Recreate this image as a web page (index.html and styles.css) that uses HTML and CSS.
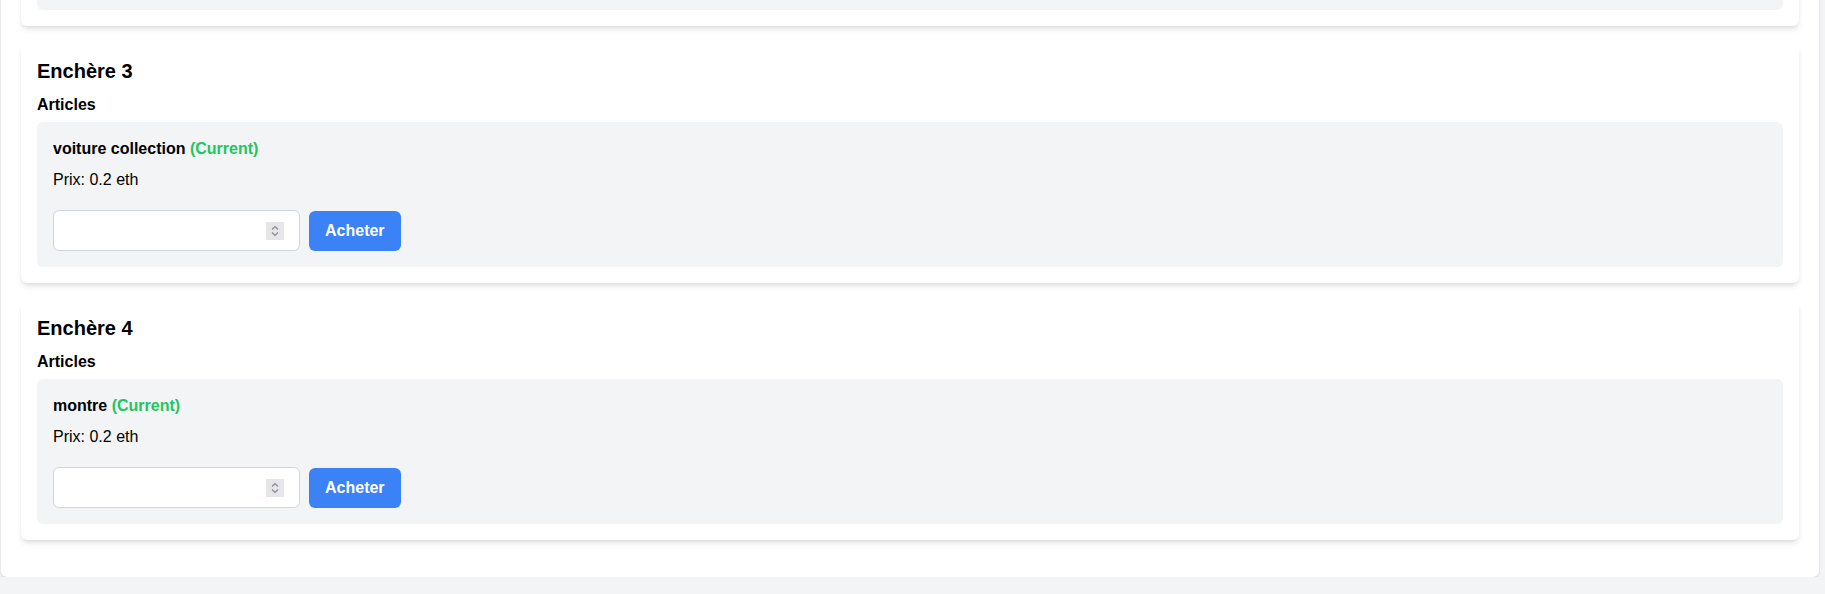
FILE: index.html
```html
<!DOCTYPE html>
<html lang="fr">
<head>
<meta charset="utf-8">
<title>Enchères</title>
<link rel="stylesheet" href="styles.css">
</head>
<body>
<main class="page">
  <section class="card card-tail">
    <div class="item item-tail"></div>
  </section>

  <section class="card">
    <h2 class="card-title">Enchère 3</h2>
    <h3 class="section-title">Articles</h3>
    <div class="item">
      <p class="item-name">voiture collection <span class="status">(Current)</span></p>
      <p class="item-price">Prix: 0.2 eth</p>
      <form class="buy-row">
        <span class="input-wrap">
          <input class="bid-input" type="number" step="0.01">
          <span class="spinner" aria-hidden="true">
            <svg width="18" height="18" viewBox="0 0 18 18"><path d="M6 7.5 L9 4.5 L12 7.5" fill="none" stroke="#8a8a8f" stroke-width="1.2"/><path d="M6 10.5 L9 13.5 L12 10.5" fill="none" stroke="#8a8a8f" stroke-width="1.2"/></svg>
          </span>
        </span>
        <button class="buy-btn" type="button">Acheter</button>
      </form>
    </div>
  </section>

  <section class="card">
    <h2 class="card-title">Enchère 4</h2>
    <h3 class="section-title">Articles</h3>
    <div class="item">
      <p class="item-name">montre <span class="status">(Current)</span></p>
      <p class="item-price">Prix: 0.2 eth</p>
      <form class="buy-row">
        <span class="input-wrap">
          <input class="bid-input" type="number" step="0.01">
          <span class="spinner" aria-hidden="true">
            <svg width="18" height="18" viewBox="0 0 18 18"><path d="M6 7.5 L9 4.5 L12 7.5" fill="none" stroke="#8a8a8f" stroke-width="1.2"/><path d="M6 10.5 L9 13.5 L12 10.5" fill="none" stroke="#8a8a8f" stroke-width="1.2"/></svg>
          </span>
        </span>
        <button class="buy-btn" type="button">Acheter</button>
      </form>
    </div>
  </section>
</main>
</body>
</html>
```

FILE: styles.css
```css
* {
  box-sizing: border-box;
}

html, body {
  margin: 0;
  padding: 0;
  background: #f3f4f6;
  overflow: hidden;
}

body {
  font-family: "Liberation Sans", Arial, sans-serif;
  color: #000;
  font-size: 16px;
}

.page {
  width: 1818px;
  margin: -60px 0 0 1px;
  padding: 20px 20px 37px;
  background: #fff;
  border-radius: 6px;
  box-shadow: 0 1px 3px rgba(0, 0, 0, 0.1), 0 1px 2px rgba(0, 0, 0, 0.06);
  display: flex;
  flex-direction: column;
  gap: 18px;
}

.card {
  background: #fff;
  border-radius: 6px;
  padding: 16px;
  box-shadow: 0 4px 6px -1px rgba(0, 0, 0, 0.1), 0 2px 4px -2px rgba(0, 0, 0, 0.1);
}

.item-tail {
  height: 34px;
  padding: 0;
}

.card-title {
  margin: 0 0 11px;
  font-size: 20px;
  line-height: 22px;
  font-weight: 700;
}

.section-title {
  margin: 0 0 5px;
  font-size: 16px;
  line-height: 24px;
  font-weight: 700;
}

.item {
  background: #f3f4f6;
  border-radius: 6px;
  padding: 16px;
}

.item-name {
  margin: 0 0 8px;
  font-weight: 700;
  line-height: 22px;
}

.status {
  color: #22c55e;
}

.item-price {
  margin: 0 0 18px;
  line-height: 24px;
}

.buy-row {
  display: flex;
  align-items: center;
  gap: 9px;
  margin: 0;
}

.input-wrap {
  position: relative;
  display: block;
  width: 247px;
  height: 41px;
}

.bid-input {
  display: block;
  width: 100%;
  height: 100%;
  padding: 8px 40px 8px 16px;
  border: 1px solid #d1d5db;
  border-radius: 6px;
  background: #fff;
  font-family: inherit;
  font-size: 16px;
  -moz-appearance: textfield;
}

.bid-input::-webkit-inner-spin-button,
.bid-input::-webkit-outer-spin-button {
  -webkit-appearance: none;
  margin: 0;
}

.spinner {
  position: absolute;
  top: 12px;
  right: 16px;
  width: 18px;
  height: 18px;
  background: #e5e5ea;
  display: block;
  pointer-events: none;
}

.spinner svg {
  display: block;
}

.buy-btn {
  height: 40px;
  padding: 0 16px;
  border: none;
  border-radius: 6px;
  background: #3b82f6;
  color: #fff;
  font-family: inherit;
  font-size: 16px;
  font-weight: 700;
  cursor: pointer;
}
```
